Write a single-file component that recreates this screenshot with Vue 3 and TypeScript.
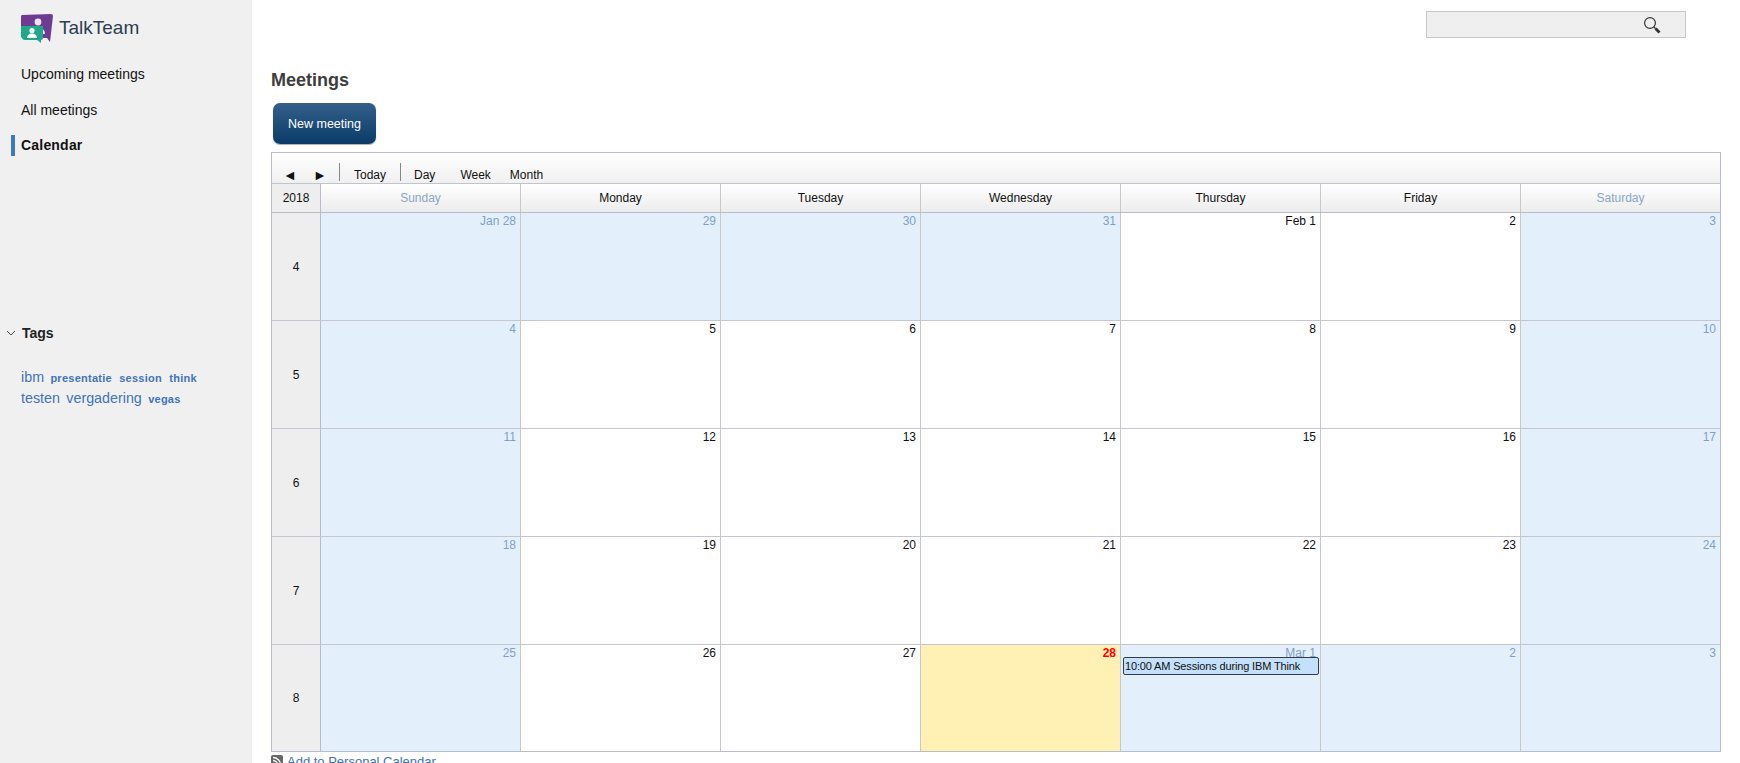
<script setup lang="ts">
interface Day { label: string; kind: string; event?: string }
const heads = ['Sunday', 'Monday', 'Tuesday', 'Wednesday', 'Thursday', 'Friday', 'Saturday']
const mk = (labels: string[], off: number[]): Day[] =>
  labels.map((label, i) => ({ label, kind: i === 0 || i === 6 || off.includes(i) ? 'off' : '' }))
const rows: { week: number; days: Day[] }[] = [
  { week: 4, days: mk(['Jan 28', '29', '30', '31', 'Feb 1', '2', '3'], [1, 2, 3]) },
  { week: 5, days: mk(['4', '5', '6', '7', '8', '9', '10'], []) },
  { week: 6, days: mk(['11', '12', '13', '14', '15', '16', '17'], []) },
  { week: 7, days: mk(['18', '19', '20', '21', '22', '23', '24'], []) },
  { week: 8, days: mk(['25', '26', '27', '28', 'Mar 1', '2', '3'], [4, 5]) }
]
rows[4].days[3].kind = 'current'
rows[4].days[4].event = '10:00 AM Sessions during IBM Think'
</script>

<template>
  <div class="page">
    <aside class="side">
      <div class="brand">
        <svg class="logo" width="32" height="30" viewBox="0 0 32 30">
          <path d="M1 1 L30 0 Q32 0 32 2 L29 28 L26 24 L3 24 Q0 24 0 21 L0 3 Q0 1 1 1 Z" fill="#6f3a91" />
          <circle cx="17" cy="8" r="3.4" fill="#e9e4ee" />
          <path d="M10 20 C10 11 24 11 24 20 Z" fill="#e9e4ee" />
          <path d="M0 12 L22 12 L22 24 Q22 26 20 26 L20 29 L16 26 L4 26 Q1 26 0 22 Z" fill="#1fa98b" />
          <circle cx="11" cy="16.5" r="2.6" fill="#fff" />
          <path d="M6 24 C6 18 16 18 16 24 Z" fill="#fff" />
        </svg>
        <span class="brand-name">TalkTeam</span>
      </div>
      <nav class="nav">
        <a class="nav-item">Upcoming meetings</a>
        <a class="nav-item">All meetings</a>
        <a class="nav-item active">Calendar</a>
      </nav>
      <section class="tags">
        <h3 class="tags-title">
          <svg width="10" height="6" viewBox="0 0 10 6"><path d="M1 1 L5 5 L9 1" fill="none" stroke="#333" stroke-width="0.9" /></svg>
          Tags
        </h3>
        <div class="cloud">
          <a class="big">ibm</a> <a class="small">presentatie</a> <a class="small">session</a> <a class="small">think</a><br />
          <a class="big">testen</a> <a class="big">vergadering</a> <a class="small">vegas</a>
        </div>
      </section>
    </aside>
    <main class="main">
      <div class="topbar">
        <div class="search">
          <svg width="18" height="18" viewBox="0 0 18 18">
            <circle cx="7" cy="7" r="5.4" fill="none" stroke="#333" stroke-width="1.2" />
            <path d="M11 11 L12.5 12.5" stroke="#333" stroke-width="1.2" />
            <path d="M12.5 12.5 L16.5 16.5" stroke="#333" stroke-width="2.8" />
          </svg>
        </div>
      </div>
      <h1 class="title">Meetings</h1>
      <button class="new-btn">New meeting</button>
      <div class="cal">
        <div class="toolbar">
          <span class="arrow">◄</span>
          <span class="arrow">►</span>
          <span class="sep first"></span>
          <span class="tb go-today">Today</span>
          <span class="sep"></span>
          <span class="tb day">Day</span>
          <span class="tb week">Week</span>
          <span class="tb month">Month</span>
        </div>
        <div class="row head">
          <div class="wk">2018</div>
          <div v-for="(h, i) in heads" :key="h" class="hd" :class="{ weekend: i === 0 || i === 6 }">{{ h }}</div>
        </div>
        <div v-for="r in rows" :key="r.week" class="row body">
          <div class="wk num">{{ r.week }}</div>
          <div v-for="(d, i) in r.days" :key="i" class="cell" :class="d.kind">
            <span class="date">{{ d.label }}</span>
            <div v-if="d.event" class="event">{{ d.event }}</div>
          </div>
        </div>
      </div>
      <div class="feed">
        <svg width="12" height="12" viewBox="0 0 12 12">
          <rect width="12" height="12" rx="2" fill="#666" />
          <circle cx="3" cy="9" r="1.3" fill="#fff" />
          <path d="M2 5.5 A4.5 4.5 0 0 1 6.5 10 M2 2.5 A7.5 7.5 0 0 1 9.5 10" fill="none" stroke="#fff" stroke-width="1.3" />
        </svg>
        <a>Add to Personal Calendar</a>
      </div>
    </main>
  </div>
</template>

<style>
html, body { margin: 0; height: 100%; overflow: hidden; background: #fff; }
</style>

<style scoped>
.page { display: flex; width: 1740px; height: 763px; overflow: hidden; font-family: "Liberation Sans", Arial, sans-serif; }
.side { width: 252px; flex: none; background: #f0f0f0; box-sizing: border-box; }
.brand { display: flex; align-items: flex-start; gap: 6px; padding: 14px 0 0 21px; height: 49px; box-sizing: border-box; }
.brand-name { font-size: 19px; line-height: 22px; color: #2c3e50; margin-top: 3px; }
.nav { display: flex; flex-direction: column; margin-top: 9px; }
.nav-item { height: 35.5px; line-height: 33px; font-size: 14px; color: #111; padding-left: 21px; position: relative; display: block; }
.active { font-weight: bold; letter-spacing: 0.2px; }
.active::before { content: ""; position: absolute; left: 11px; top: 6px; width: 4px; height: 21px; background: #3f78bd; }
.tags { margin-top: 158.5px; }
.tags-title { margin: 0; font-size: 14px; font-weight: bold; color: #222; padding-left: 6px; display: flex; align-items: center; gap: 6px; height: 20px; }
.cloud { margin: 24px 0 0 21px; width: 225px; line-height: 20px; font-size: 12px; color: #4273b8; white-space: nowrap; }
.big { font-size: 14.3px; margin-right: 3px; }
.small { font-size: 11px; font-weight: bold; margin-right: 4px; letter-spacing: 0.25px; }
.main { flex: 1; padding-left: 19px; min-width: 0; }
.topbar { display: flex; justify-content: flex-end; height: 38px; padding: 11px 54px 0 0; box-sizing: border-box; }
.search { width: 260px; height: 27px; box-sizing: border-box; background: #efefef; border: 1px solid #c8c8c8; display: flex; justify-content: flex-end; align-items: center; padding-right: 24px; }
.title { margin: 32px 0 0; font-size: 18px; line-height: 21px; font-weight: bold; color: #3d3d3d; }
.new-btn { display: block; margin: 12px 0 0 2px; width: 103px; height: 41px; border: 0; border-radius: 7px; background: linear-gradient(#33608a, #0a3b68); color: #fff; font: 12.5px "Liberation Sans", Arial, sans-serif; box-shadow: 0 1px 1px #aaa; }
.cal { margin-top: 8px; width: 1450px; height: 600px; box-sizing: border-box; border: 1px solid #b7bcc8; }
.toolbar { height: 31px; background: linear-gradient(#fff, #f0f0f0); display: flex; align-items: flex-end; box-sizing: border-box; border-bottom: 1px solid #c0c4cf; font-size: 12px; color: #111; padding: 0 0 1px 3px; }
.arrow { font-size: 14px; color: #111; width: 30px; text-align: center; line-height: 14px; }
.sep { width: 1px; height: 18px; background: #888; margin-bottom: 1px; }
.sep.first { margin-left: 4px; }
.tb { line-height: 14px; }
.go-today { margin: 0 14px 0 14px; }
.day { margin-left: 13px; }
.week { margin-left: 25px; }
.month { margin-left: 19px; }
.row { display: grid; grid-template-columns: 49px repeat(6, 200px) 1fr; }
.head { height: 29px; box-sizing: border-box; border-bottom: 1px solid #b7bcc8; }
.body { height: 108px; box-sizing: border-box; border-bottom: 1px solid #c4c7cf; }
.body:last-child { border-bottom: 0; height: 106px; }
.wk { background: #eee; display: flex; align-items: center; justify-content: center; font-size: 12px; color: #111; border-right: 1px solid #b7bcc8; }
.hd { display: flex; align-items: center; justify-content: center; font-size: 12px; color: #111; background: linear-gradient(#fff, #ececec); border-right: 1px solid #c8c8c8; }
.hd:last-child, .cell:last-child { border-right: 0; }
.hd.weekend { color: #8aa6c8; }
.cell { border-right: 1px solid #c8c8c8; background: #fff; text-align: right; padding: 1px 4px 0 0; font-size: 12px; color: #111; position: relative; }
.date { display: block; line-height: 14px; }
.off { background: #e3f0fc; }
.off .date { color: #7f9fc6; }
.cell.current { background: #fff0b3; }
.cell.current .date { color: #f00; font-weight: bold; }
.event { position: absolute; left: 2px; right: 1px; top: 12px; height: 18px; box-sizing: border-box; border: 1px solid #333b48; border-radius: 2px; background: #c4e0fb; color: #111; font-size: 11px; letter-spacing: -0.15px; line-height: 16px; text-align: left; padding-left: 1px; white-space: nowrap; overflow: hidden; }
.feed { display: flex; align-items: center; gap: 4px; height: 14px; margin-top: 2px; font-size: 13px; color: #3f6fb5; }
</style>
